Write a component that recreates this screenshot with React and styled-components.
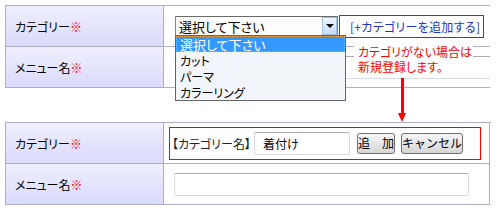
import React from 'react';
import styled, { createGlobalStyle } from 'styled-components';

const GlobalStyle = createGlobalStyle`
  html, body {
    margin: 0;
    background: #fff;
  }
  body {
    font-family: "Noto Sans CJK JP", "DejaVu Sans", sans-serif;
    font-size: 12px;
    font-feature-settings: "palt";
    color: #000;
  }
`;

const Page = styled.div`
  position: relative;
  width: 500px;
  height: 211px;
  padding: 5px 0 0 5px;
  box-sizing: border-box;
  overflow: hidden;
`;

const FormTable = styled.div`
  display: grid;
  grid-template-columns: 158px 326px;
  border-top: 1px solid #adadcf;
  border-left: 1px solid #adadcf;
  width: ${props => (props.$open ? '484px' : '485px')};
  margin-bottom: ${props => props.$gap || 0}px;
`;

const Label = styled.div`
  height: 40px;
  display: flex;
  align-items: center;
  padding-left: 9px;
  background: linear-gradient(#efefff, #dadafb);
  border-right: 1px solid #adadcf;
  border-bottom: 1px solid #adadcf;
  white-space: nowrap;
`;

const Required = styled.span`
  color: #ff0000;
`;

const Value = styled.div`
  height: 40px;
  display: flex;
  align-items: center;
  padding-left: ${props => props.$pad || 11}px;
  border-bottom: 1px solid #adadcf;
  border-right: ${props => (props.$open ? 'none' : '1px solid #adadcf')};
  overflow: hidden;
  white-space: nowrap;
`;

const SelectBox = styled.div`
  width: 163px;
  height: 20px;
  box-sizing: border-box;
  display: flex;
  align-items: center;
  border: 1px solid #7f8a96;
  border-top-color: #6a6a6a;
  background: #fdfdfd;
  padding-left: 3px;
  font-size: 13px;
`;

const SelectText = styled.span`
  flex: 1;
`;

const SelectButton = styled.span`
  width: 15px;
  height: 18px;
  box-sizing: border-box;
  display: flex;
  align-items: center;
  justify-content: center;
  border: 1px solid #9fc0e8;
  background: linear-gradient(#f0f6ff, #c5dcf6);
`;

const Triangle = styled.span`
  width: 0;
  height: 0;
  border-left: 4px solid transparent;
  border-right: 4px solid transparent;
  border-top: 4px solid #000;
`;

const LinkBox = styled.div`
  margin-left: 1px;
  width: 145px;
  height: 23px;
  box-sizing: border-box;
  border: 1px solid #ff0000;
  display: flex;
  align-items: center;
  padding-left: 10px;
  color: #2030cc;
  font-size: 12px;
  letter-spacing: 0.3px;
`;

const TextInput = styled.div`
  width: ${props => props.$w}px;
  height: 23px;
  box-sizing: border-box;
  flex-shrink: 0;
  border: 1px solid #d6dde6;
  border-top-color: #acacac;
  border-radius: 2px;
  background: #fff;
  display: flex;
  align-items: center;
  padding-left: 8px;
  font-size: 12px;
`;

const DropList = styled.div`
  position: absolute;
  left: 175px;
  top: 35px;
  width: 171px;
  box-sizing: border-box;
  border: 1px solid #666;
  background: #f2f5fa;
`;

const DropItem = styled.div`
  height: 16px;
  box-sizing: border-box;
  display: flex;
  align-items: center;
  padding-left: 3px;
  font-size: ${props => (props.$active ? '13px' : '12px')};
  color: ${props => (props.$active ? '#fff' : '#000')};
  background: ${props => (props.$active ? '#3399ff' : 'transparent')};
  border: 1px dotted ${props => (props.$active ? '#f0a040' : 'transparent')};
`;

const Note = styled.div`
  position: absolute;
  left: 354px;
  top: 41px;
  width: 119px;
  padding: 3px 0 3px 4px;
  box-sizing: border-box;
  background: #fff;
  color: #ff0000;
  font-size: 12px;
  line-height: 15px;
  white-space: nowrap;
`;

const ArrowShaft = styled.div`
  position: absolute;
  left: 401px;
  top: 78px;
  width: 3px;
  height: 36px;
  background: #ff0000;
`;

const ArrowHead = styled.div`
  position: absolute;
  left: 398px;
  top: 113px;
  width: 0;
  height: 0;
  border-left: 4.5px solid transparent;
  border-right: 4.5px solid transparent;
  border-top: 9px solid #ff0000;
`;

const AddBox = styled.div`
  width: 312px;
  height: 33px;
  box-sizing: border-box;
  border: 1px solid #ff0000;
  display: flex;
  align-items: center;
  padding-left: 2px;
`;

const AddLabel = styled.span`
  width: 82px;
  flex-shrink: 0;
  color: #222;
  overflow: hidden;
`;

const Button = styled.button`
  height: 21px;
  width: ${props => props.$w}px;
  margin-left: ${props => props.$ml}px;
  padding: 0;
  box-sizing: border-box;
  border: 1px solid #707070;
  border-radius: 3px;
  background: linear-gradient(#f6f6f6, #d6d6d6);
  font-family: inherit;
  font-feature-settings: normal;
  font-size: 12px;
  color: #000;
  line-height: 1;
  white-space: nowrap;
`;

const App = () => {
  return (
    <>
      <GlobalStyle />
      <Page>
        <FormTable $open $gap={34}>
          <Label>
            カテゴリー<Required>※</Required>
          </Label>
          <Value $open>
            <SelectBox>
              <SelectText>選択して下さい</SelectText>
              <SelectButton>
                <Triangle />
              </SelectButton>
            </SelectBox>
            <LinkBox>[+カテゴリーを追加する]</LinkBox>
          </Value>
          <Label>
            メニュー名<Required>※</Required>
          </Label>
          <Value $open>
            <TextInput $w={330} />
          </Value>
        </FormTable>

        <FormTable>
          <Label>
            カテゴリー<Required>※</Required>
          </Label>
          <Value $pad={5}>
            <AddBox>
              <AddLabel>【カテゴリー名】</AddLabel>
              <TextInput $w={96}>着付け</TextInput>
              <Button $w={38} $ml={7}>追　加</Button>
              <Button $w={62} $ml={6}>キャンセル</Button>
            </AddBox>
          </Value>
          <Label>
            メニュー名<Required>※</Required>
          </Label>
          <Value $pad={10}>
            <TextInput $w={295} />
          </Value>
        </FormTable>

        <DropList>
          <DropItem $active>選択して下さい</DropItem>
          <DropItem>カット</DropItem>
          <DropItem>パーマ</DropItem>
          <DropItem>カラーリング</DropItem>
        </DropList>
        <Note>
          カテゴリがない場合は
          <br />
          新規登録します。
        </Note>
        <ArrowShaft />
        <ArrowHead />
      </Page>
    </>
  );
};

export default App;
